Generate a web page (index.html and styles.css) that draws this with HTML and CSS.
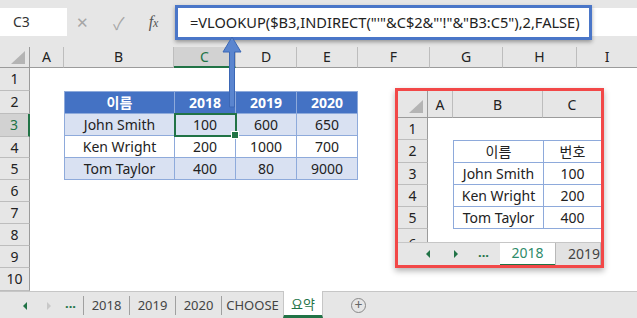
FILE: index.html
```html
<!DOCTYPE html>
<html lang="ko">
  <head>
    <meta charset="UTF-8" />
    <title>VLOOKUP INDIRECT</title>
    <link rel="stylesheet" href="styles.css">
  </head>
  <body>
    <div class="excel">
      <div class="formula-bar">
        <div class="name-box">C3</div>
        <div class="fb-icons">
          <span class="fb-x">&#x2715;</span>
          <span class="fb-check">&#x2713;</span>
          <span class="fb-fx"><i>f</i><i class="x">x</i></span>
        </div>
        <div class="formula-input"></div>
      </div>

      <div class="sheet">
        <div class="corner"><span class="tri"></span></div>
        <div class="col-head">A</div>
        <div class="col-head">B</div>
        <div class="col-head active">C</div>
        <div class="col-head">D</div>
        <div class="col-head">E</div>
        <div class="col-head">F</div>
        <div class="col-head">G</div>
        <div class="col-head">H</div>
        <div class="col-head last">I</div>

        <div class="row-head">1</div>
        <div class="row-head">2</div>
        <div class="row-head active">3</div>
        <div class="row-head">4</div>
        <div class="row-head">5</div>
        <div class="row-head">6</div>
        <div class="row-head">7</div>
        <div class="row-head">8</div>
        <div class="row-head">9</div>
        <div class="row-head">10</div>

        <table class="data">
          <colgroup>
            <col class="col-name"><col class="col-year"><col class="col-year"><col class="col-year">
          </colgroup>
          <tr class="head">
            <th>이름</th><th>2018</th><th>2019</th><th>2020</th>
          </tr>
          <tr class="band">
            <td>John Smith</td><td class="selected">100</td><td>600</td><td>650</td>
          </tr>
          <tr>
            <td>Ken Wright</td><td>200</td><td>1000</td><td>700</td>
          </tr>
          <tr class="band">
            <td>Tom Taylor</td><td>400</td><td>80</td><td>9000</td>
          </tr>
        </table>
      </div>

      <div class="tabs">
        <div class="tab-nav">
          <span class="nav-left"></span>
          <span class="nav-right dim"></span>
          <span class="nav-dots">...</span>
        </div>
        <div class="tab">2018</div>
        <div class="tab">2019</div>
        <div class="tab">2020</div>
        <div class="tab wide">CHOOSE</div>
        <div class="tab current">요약</div>
        <div class="tab-add">+</div>
      </div>

      <!-- annotation overlays -->
      <div class="formula-highlight">=VLOOKUP($B3,INDIRECT("'"&amp;C$2&amp;"'!"&amp;"B3:C5"),2,FALSE)</div>

      <svg class="arrow" width="22" height="73" viewBox="0 0 22 73">
        <path d="M11 1 L20 16 L13.5 16 L13.5 71 L8.5 71 L8.5 16 L2 16 Z"
              fill="#5a85cf" stroke="#3b67b5" stroke-width="1" />
      </svg>

      <div class="inset">
        <div class="mini-sheet">
          <div class="corner"><span class="tri"></span></div>
          <div class="col-head">A</div>
          <div class="col-head">B</div>
          <div class="col-head last">C</div>

          <div class="row-head">1</div>
          <div class="row-head">2</div>
          <div class="row-head">3</div>
          <div class="row-head">4</div>
          <div class="row-head">5</div>
          <div class="row-head cut">6</div>

          <table class="mini-data">
            <colgroup>
              <col class="col-mname"><col>
            </colgroup>
            <tr><td>이름</td><td>번호</td></tr>
            <tr><td>John Smith</td><td>100</td></tr>
            <tr><td>Ken Wright</td><td>200</td></tr>
            <tr><td>Tom Taylor</td><td>400</td></tr>
          </table>
        </div>
        <div class="mini-tabs">
          <div class="tab-nav">
            <span class="nav-left"></span>
            <span class="nav-right"></span>
            <span class="nav-dots">...</span>
          </div>
          <div class="tab current">2018</div>
          <div class="tab other">2019</div>
        </div>
      </div>
    </div>
  </body>
</html>
```

FILE: styles.css
```css
:root {
  --green: #217346;
  --head-bg: #e6e6e6;
  --head-line: #bdbdbd;
  --table-blue: #4472c4;
  --table-line: #8eaadb;
  --band: #d9e1f2;
}

* {
  margin: 0;
  padding: 0;
  box-sizing: border-box;
}

body {
  font-family: "Noto Sans", "Noto Sans CJK KR", sans-serif;
  background: #ffffff;
  color: #222;
}

.excel {
  position: relative;
  width: 637px;
  height: 318px;
  overflow: hidden;
  background: #ffffff;
}

/* formula bar */
.formula-bar {
  height: 47px;
  background: var(--head-bg);
  display: flex;
  align-items: flex-start;
  padding-top: 8px;
}

.name-box {
  width: 67px;
  height: 28px;
  background: #fff;
  font-size: 14px;
  line-height: 28px;
  padding-left: 13px;
  color: #333;
}

.fb-icons {
  width: 108px;
  height: 28px;
  display: flex;
  align-items: center;
  color: #a6a6a6;
  font-size: 15px;
}

.fb-x {
  margin-left: 9px;
}

.fb-check {
  margin-left: 24px;
  font-size: 17px;
}

.fb-fx {
  margin-left: 24px;
  font-family: "Liberation Serif", serif;
  font-size: 16px;
  color: #555;
}

.fb-fx .x {
  font-size: 12px;
}

.formula-input {
  flex: 1;
  height: 28px;
  background: #fff;
}

/* worksheet grid */
.sheet {
  display: grid;
  grid-template-columns: 30px 34px 110px 62px 61px 61px 72px 73px 74px 1fr;
  grid-template-rows: 21px 23px 23px 23px 21px 22px 22px 22px 22px 22px 23px;
}

.corner {
  position: relative;
  background: var(--head-bg);
  border-right: 1px solid #9b9b9b;
  border-bottom: 1px solid #9b9b9b;
}

.corner .tri {
  position: absolute;
  right: 4px;
  bottom: 3px;
  width: 14px;
  height: 13px;
  background: #b4b4b4;
  clip-path: polygon(100% 0, 100% 100%, 0 100%);
}

.col-head {
  background: var(--head-bg);
  border-right: 1px solid var(--head-line);
  border-bottom: 1px solid #9b9b9b;
  text-align: center;
  font-size: 14px;
  line-height: 20px;
  color: #222;
}

.col-head.last {
  border-right: none;
}

.col-head.active {
  background: #d2d2d2;
  color: var(--green);
  border-bottom: 2px solid var(--green);
}

.row-head {
  grid-column: 1;
  background: var(--head-bg);
  border-right: 1px solid #9b9b9b;
  border-bottom: 1px solid var(--head-line);
  text-align: center;
  font-size: 14px;
  line-height: 22px;
  color: #222;
  overflow: hidden;
}

.row-head.active {
  background: #d2d2d2;
  color: var(--green);
  border-right: 2px solid var(--green);
}

/* data table B2:E5 */
.data {
  grid-column: 3 / 7;
  grid-row: 3 / 7;
  width: 100%;
  height: 100%;
  border-collapse: collapse;
  table-layout: fixed;
  font-size: 14px;
}

.col-name {
  width: 110px;
}

.col-year {
  width: 61px;
}

.data th,
.data td {
  border: 1px solid var(--table-line);
  text-align: center;
  padding: 0;
  line-height: 19px;
  white-space: nowrap;
}

.data .head th {
  background: var(--table-blue);
  color: #fff;
  font-weight: 700;
}

.data .band td {
  background: var(--band);
}

.data td.selected {
  position: relative;
  outline: 2px solid var(--green);
  outline-offset: -1px;
}

.data td.selected::after {
  content: "";
  position: absolute;
  right: -4px;
  bottom: -4px;
  width: 6px;
  height: 6px;
  background: var(--green);
  border: 1px solid #fff;
}

/* sheet tabs */
.tabs {
  height: 27px;
  background: var(--head-bg);
  border-top: 1px solid #c6c6c6;
  display: flex;
  align-items: stretch;
  font-size: 13px;
  color: #444;
}

.tab-nav {
  width: 83px;
  position: relative;
  flex-shrink: 0;
}

.nav-left,
.nav-right {
  position: absolute;
  top: 10px;
  width: 0;
  height: 0;
  border-top: 4px solid transparent;
  border-bottom: 4px solid transparent;
}

.tabs .nav-left {
  left: 23px;
  border-right: 4px solid var(--green);
}

.tabs .nav-right {
  left: 47px;
  border-left: 4px solid #c8c8c8;
}

.nav-dots {
  position: absolute;
  left: 65px;
  top: 2px;
  color: var(--green);
  font-weight: 700;
  font-size: 13px;
}

.tab {
  width: 46px;
  flex-shrink: 0;
  border-left: 1px solid #a0a0a0;
  margin: 4px 0 3px;
  text-align: center;
  line-height: 19px;
  white-space: nowrap;
}

.tab.wide {
  width: 62px;
}

.tabs .tab.current {
  width: 40px;
  margin: -1px 0 0;
  background: #fff;
  border-left: 1px solid #c6c6c6;
  border-right: 1px solid #c6c6c6;
  border-bottom: 3px solid var(--green);
  color: var(--green);
  line-height: 26px;
}

.tab-add {
  margin: 6px 0 0 28px;
  width: 15px;
  height: 15px;
  border: 1px solid #888;
  border-radius: 50%;
  text-align: center;
  font-size: 14px;
  line-height: 12px;
  color: #666;
}

/* annotation overlays */
.formula-highlight {
  position: absolute;
  left: 175px;
  top: 5px;
  width: 417px;
  height: 35px;
  border: 3px solid #4a76c8;
  background: #fff;
  box-shadow: 0 2px 4px rgba(0, 0, 0, 0.35);
  font-size: 14.6px;
  line-height: 29px;
  padding-left: 12px;
  color: #222;
  white-space: nowrap;
}

.arrow {
  position: absolute;
  left: 221px;
  top: 36px;
}

/* inset screenshot of sheet 2018 */
.inset {
  position: absolute;
  left: 395px;
  top: 88px;
  width: 209px;
  height: 180px;
  border: 3px solid #f24848;
  background: #fff;
  box-shadow: 0 3px 6px rgba(0, 0, 0, 0.3);
  display: flex;
  flex-direction: column;
}

.mini-sheet {
  flex: 1;
  display: grid;
  grid-template-columns: 30px 25px 90px 1fr;
  grid-template-rows: 27px 22px 23px 22px 22px 22px 1fr;
  overflow: hidden;
}

.mini-sheet .col-head {
  line-height: 28px;
}

.mini-sheet .corner .tri {
  right: 4px;
  bottom: 4px;
}

.row-head.cut {
  border-bottom: none;
  line-height: 30px;
}

.mini-data {
  grid-column: 3 / 5;
  grid-row: 3 / 7;
  width: 100%;
  height: 100%;
  border-collapse: collapse;
  table-layout: fixed;
  font-size: 14px;
}

.col-mname {
  width: 90px;
}

.mini-data td {
  border: 1px solid var(--table-line);
  text-align: center;
  line-height: 19px;
  white-space: nowrap;
}

.mini-data td:last-child {
  border-right: none;
}

.mini-tabs {
  height: 23px;
  flex-shrink: 0;
  background: var(--head-bg);
  border-top: 1px solid #c6c6c6;
  display: flex;
  font-size: 14px;
  overflow: hidden;
}

.mini-tabs .tab-nav {
  width: 102px;
}

.mini-tabs .nav-left {
  top: 7px;
  left: 28px;
  border-right: 4px solid var(--green);
}

.mini-tabs .nav-right {
  top: 7px;
  left: 56px;
  border-left: 4px solid var(--green);
}

.mini-tabs .nav-dots {
  left: 80px;
  top: 0;
}

.mini-tabs .tab {
  margin: -1px 0 0;
  border-left: none;
  line-height: 22px;
}

.mini-tabs .tab.current {
  width: 55px;
  background: #fff;
  color: #2e8b6a;
  border-bottom: 1px solid var(--green);
}

.mini-tabs .tab.other {
  flex: 1;
  background: #e2e2e2;
  border: 1px solid #b8b8b8;
  border-bottom: none;
  color: #444;
  text-align: left;
  padding-left: 12px;
  overflow: hidden;
}
```
